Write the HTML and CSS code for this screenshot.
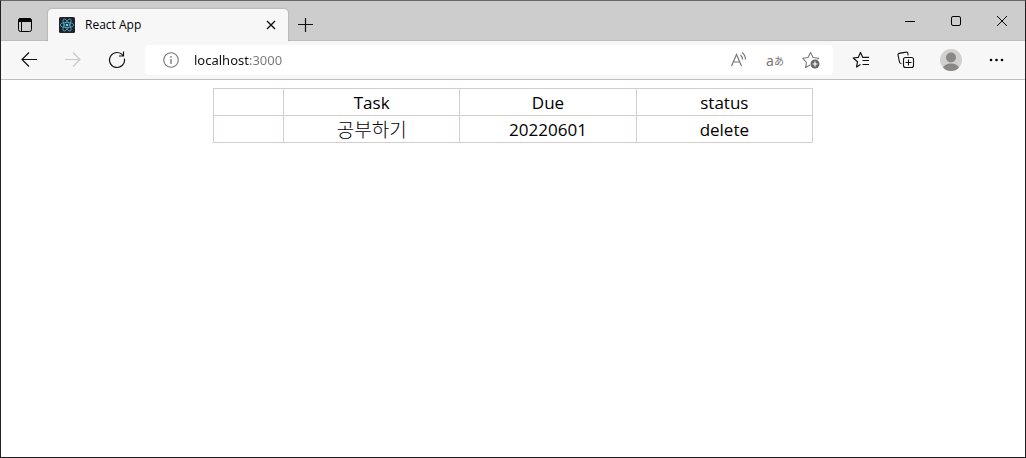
FILE: index.html
```html
<!DOCTYPE html>
<html lang="ko">
<head>
	<meta charset="UTF-8">
	<title>React App</title>
	<link rel="stylesheet" href="styles.css">
</head>
<body>

<div class="window">
	<!-- 탭 -->
	<header class="tab_bar">
		<button class="btn_menu" type="button" aria-label="탭 작업 메뉴">
			<svg width="16" height="16" viewBox="0 0 16 16"><rect x="1.5" y="1.5" width="13" height="13" rx="2" fill="none" stroke="#000"/><path d="M1.5 5V3a2 2 0 0 1 2-2h9a2 2 0 0 1 2 2v2z"/><path d="M4.500 5v9.500" fill="none" stroke="#000"/></svg>
		</button>
		<div class="tab">
			<svg class="tab_icon" width="16" height="16" viewBox="0 0 16 16"><rect width="16" height="16" rx="1.500" fill="#20232a"/><g fill="none" stroke="#61dafb" stroke-width=".7" opacity=".85"><ellipse cx="8" cy="8" rx="6.800" ry="2.600"/><ellipse cx="8" cy="8" rx="6.800" ry="2.600" transform="rotate(60 8 8)"/><ellipse cx="8" cy="8" rx="6.800" ry="2.600" transform="rotate(120 8 8)"/></g><circle cx="8" cy="8" r="1.300" fill="#61dafb"/></svg>
			<span class="tab_title">React App</span>
			<button class="btn_cls" type="button" aria-label="탭 닫기">
				<svg width="10" height="10" viewBox="0 0 10 10"><path d="M1 1l8 8M9 1l-8 8" fill="none" stroke="#111" stroke-width="1.400"/></svg>
			</button>
		</div>
		<button class="btn_new" type="button" aria-label="새 탭">
			<svg width="16" height="16" viewBox="0 0 16 16"><path d="M8.500 1v14M1 7.500h15" fill="none" stroke="#111" stroke-width="1.200"/></svg>
		</button>
		<div class="win_btns">
			<button type="button" aria-label="최소화">
				<svg width="12" height="12" viewBox="0 0 12 12"><path d="M1 6.500h10" fill="none" stroke="#000"/></svg>
			</button>
			<button type="button" aria-label="최대화">
				<svg width="12" height="12" viewBox="0 0 12 12"><rect x="1.500" y="1.500" width="9" height="9" rx="1.500" fill="none" stroke="#000"/></svg>
			</button>
			<button type="button" aria-label="닫기">
				<svg width="12" height="12" viewBox="0 0 12 12"><path d="M1 1l10 10M11 1L1 11" fill="none" stroke="#000"/></svg>
			</button>
		</div>
	</header>

	<!-- 주소창 -->
	<div class="tool_bar">
		<nav class="nav_btns">
			<button type="button" aria-label="뒤로">
				<svg width="18" height="18" viewBox="0 0 18 18"><path d="M17 8.500H2M9 1.500l-7 7 7 7" fill="none" stroke="#111" stroke-width="1.200"/></svg>
			</button>
			<button type="button" aria-label="앞으로" disabled>
				<svg width="18" height="18" viewBox="0 0 18 18"><path d="M1 8.500h15M9 1.500l7 7-7 7" fill="none" stroke="#c8c8c8" stroke-width="1.200"/></svg>
			</button>
			<button type="button" aria-label="새로 고침">
				<svg width="18" height="18" viewBox="0 0 18 18"><path d="M16.400 7.600A7.500 7.500 0 1 1 14.800 4.200M15.500.5v4.500H11" fill="none" stroke="#111" stroke-width="1.200"/></svg>
			</button>
		</nav>
		<div class="address">
			<button class="btn_info" type="button" aria-label="사이트 정보">
				<svg width="16" height="16" viewBox="0 0 16 16"><circle cx="8" cy="8" r="7.300" fill="none" stroke="#777" stroke-width="1.100"/><path d="M8 7v5" fill="none" stroke="#777" stroke-width="1.300"/><circle cx="8" cy="4.800" r=".9" fill="#777"/></svg>
			</button>
			<input class="url" type="text" value="localhost:3000" aria-label="주소" spellcheck="false">
			<button class="btn_adr" type="button" aria-label="소리내어 읽기">
				<svg width="18" height="18" viewBox="0 0 18 18"><g fill="none" stroke="#777" stroke-width="1.200"><path d="M1.500 15L6.500 3.500l5 11.500M3.200 11h6.600"/><path d="M10.500 4a6 6 0 0 1 2 4.500M12 1.500A9 9 0 0 1 15.500 8.500"/></g></svg>
			</button>
			<button class="btn_adr" type="button" aria-label="번역">a<small>あ</small></button>
			<button class="btn_adr" type="button" aria-label="즐겨찾기에 추가">
				<svg width="18" height="18" viewBox="0 0 18 18"><path d="M8 14l-4.300 2.500.7-5L.8 7.300l5.200-.8L8.500 1.600l2.600 4.900 5.400.8-1 1" fill="none" stroke="#777" stroke-width="1.100" stroke-linejoin="round"/><circle cx="13" cy="13" r="4.500" fill="#666"/><path d="M13 10.500v5M10.500 13h5" stroke="#fff" stroke-width="1.200"/></svg>
			</button>
		</div>
		<div class="tool_btns">
			<button type="button" aria-label="즐겨찾기">
				<svg width="18" height="18" viewBox="0 0 18 18"><path d="M8.500 13.500L4.500 16l1-5.200L1.200 7l5-.6L8.500 1.500l2.300 4.900h6.200M10.500 9.500H17M10.500 13.500H17" fill="none" stroke="#111" stroke-width="1.200" stroke-linejoin="round"/></svg>
			</button>
			<button type="button" aria-label="컬렉션">
				<svg width="18" height="18" viewBox="0 0 18 18"><g fill="none" stroke="#111" stroke-width="1.100"><path d="M4.500 12.500l-1-.3a1.500 1.500 0 0 1-1-1.200L1 4.200a1.500 1.500 0 0 1 1.200-1.800L9 1.100a1.500 1.500 0 0 1 1.800 1.200l.4 2"/><rect x="6.500" y="6.500" width="10" height="10" rx="2"/><path d="M11.500 8.500v6M8.500 11.500h6"/></g></svg>
			</button>
			<button type="button" aria-label="프로필">
				<svg width="22" height="22" viewBox="0 0 22 22"><defs><clipPath id="face"><circle cx="11" cy="11" r="11"/></clipPath></defs><g clip-path="url(#face)"><rect width="22" height="22" fill="#d2d0ce"/><circle cx="11" cy="8.500" r="5" fill="#8a8886"/><ellipse cx="11" cy="19.500" rx="8" ry="5" fill="#8a8886"/></g></svg>
			</button>
			<button type="button" aria-label="설정 및 기타">
				<svg width="16" height="16" viewBox="0 0 16 16"><circle cx="3" cy="8" r="1.300"/><circle cx="8.500" cy="8" r="1.300"/><circle cx="14" cy="8" r="1.300"/></svg>
			</button>
		</div>
	</div>

	<!-- 할 일 목록 -->
	<main class="page">
		<table class="todo">
			<thead>
				<tr>
					<th class="chk"></th>
					<th>Task</th>
					<th>Due</th>
					<th>status</th>
				</tr>
			</thead>
			<tbody>
				<tr>
					<td></td>
					<td class="task">공부하기</td>
					<td>20220601</td>
					<td>delete</td>
				</tr>
			</tbody>
		</table>
	</main>
</div>

</body>
</html>
```
FILE: styles.css
```css
*{ margin: 0; padding: 0; box-sizing: border-box; }
body{ font-family: "Noto Sans", "Noto Sans CJK KR", sans-serif; color: #000; background: #fff; }
button{ display: flex; align-items: center; justify-content: center; border: 0; background: none; font-family: inherit; }
svg{ display: block; flex: none; }
.window{ display: flex; flex-direction: column; min-height: 100vh; border: 1px solid #231f20; border-top-color: #666; }

/*탭*/
.tab_bar{ display: flex; align-items: flex-end; height: 40px; background: #cdcdcd; box-shadow: inset 0 -1px #bdbdbd; }
.btn_menu{ width: 47px; height: 32px; }
.tab{ display: flex; align-items: center; width: 240px; height: 32px; padding: 0 10px 0 11px; background: #f7f7f7; border-radius: 4px 4px 0 0; box-shadow: 0 0 2px rgba(0, 0, 0, .3); clip-path: inset(-2px -2px 0 -2px); }
.tab_title{ flex: 1; margin-left: 10px; font-family: "Open Sans", sans-serif; font-size: 12px; line-height: 16px; }
.btn_cls{ width: 14px; height: 24px; }
.btn_new{ width: 34px; height: 32px; }
.win_btns{ display: flex; margin-left: auto; }
.win_btns button{ width: 46px; height: 40px; }

/*주소창*/
.tool_bar{ display: flex; align-items: center; gap: 6px; height: 39px; padding: 0 7px 0 6px; background: #f7f7f7; border-bottom: 1px solid #bebebe; }
.nav_btns{ display: flex; }
.nav_btns button,
.tool_btns button{ width: 44px; height: 30px; }
.address{ display: flex; flex: 1; align-items: center; height: 30px; padding: 0 4px 0 17px; background: #fff; border-radius: 4px; }
.btn_info{ width: 18px; height: 30px; }
.url{ flex: 1; min-width: 0; height: 30px; margin-left: 14px; border: 0; outline: 0; font-family: inherit; font-size: 13px; color: transparent; background: linear-gradient(to right, #111 56px, #777 56px); -webkit-background-clip: text; background-clip: text; caret-color: #000; }
.btn_adr{ width: 36px; height: 30px; font-family: "Noto Sans", "Noto Sans CJK JP", sans-serif; font-size: 14px; color: #777; }
.btn_adr small{ font-size: 10px; }
.tool_btns{ display: flex; gap: 1px; }

/*할 일 목록*/
.page{ flex: 1; padding: 8px; }
.todo{ width: 600px; max-width: 100%; margin: 0 auto; table-layout: fixed; border-collapse: collapse; text-align: center; font-family: "Open Sans", "Noto Sans CJK KR", sans-serif; font-size: 17px; line-height: 24px; }
.todo th,
.todo td{ height: 27px; padding-top: 2px; border: 1px solid #d5cdcd; font-weight: 400; }
.todo .chk{ width: 70px; }
.todo .task{ font-size: 19px; font-weight: 300; }
```
